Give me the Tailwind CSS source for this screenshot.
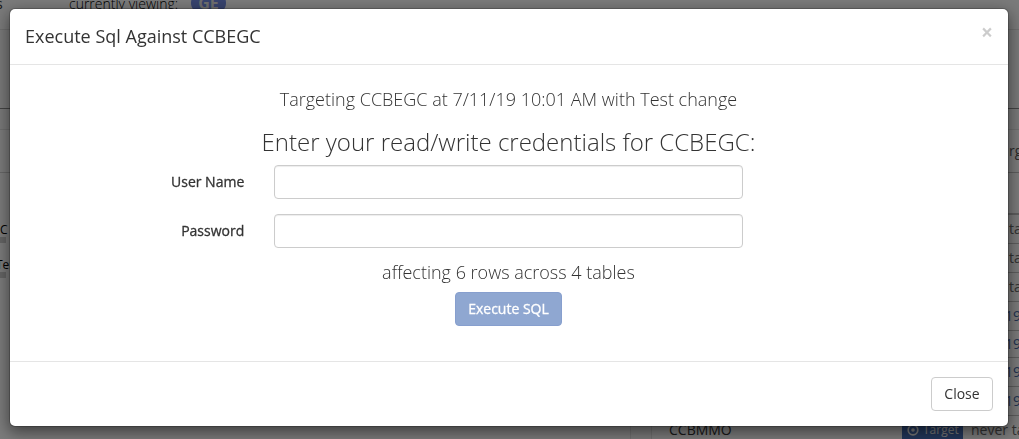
<!DOCTYPE html>
<html lang="en">
<head>
<meta charset="utf-8">
<meta name="viewport" content="width=device-width, initial-scale=1">
<title>Execute Sql</title>
<script src="https://cdn.jsdelivr.net/npm/@tailwindcss/browser@4"></script>
</head>
<body class="h-screen overflow-hidden bg-[#f2f2f2] font-['Open_Sans',sans-serif] text-sm text-[#333]">

<!-- Page behind the dialog -->
<div class="flex flex-col h-screen overflow-hidden" aria-hidden="true">
  <header class="flex h-[30px] shrink-0 items-start border-b border-[#dcdcdc] bg-[#f5f5f5] text-sm leading-5">
    <span class="-mt-1.5 w-[69px] -indent-1">s</span>
    <span class="-mt-1.5 w-[108px] whitespace-nowrap font-light text-black">currently viewing:</span>
    <span class="-mt-2 ml-3.5 w-[35px] rounded-full bg-[#6f87dc] text-center text-base leading-[22px] font-bold text-[#ddd]">GE</span>
  </header>
  <div class="h-[79px] shrink-0 border-b border-[#888] bg-[#f2f2f2]"></div>
  <main class="flex grow gap-5 pt-5">
    <section class="w-[631px] shrink-0 border border-l-0 border-[#ddd] bg-[#f6f6f6]">
      <div class="h-[43px] border-b border-[#ccc]"></div>
      <div class="mt-[50px] text-xs leading-[14px] text-black"><p>C</p><div class="h-1.5 w-1.5 bg-[#c8c8c8]"></div></div>
      <div class="mt-[15px] -indent-1 text-xs leading-[14px] text-black"><p>Te:</p><div class="h-1.5 w-1.5 bg-[#c8c8c8]"></div></div>
    </section>
    <section class="min-w-0 grow overflow-hidden border-l border-t border-[#ddd] bg-[#f6f6f6]">
      <div class="flex h-[43px] items-center border-b border-[#bbb] pl-[357px] text-sm text-[#555]">rget</div>
      <table class="mt-10 w-[500px] table-fixed border-t-2 border-[#bbb] text-[#666]">
        <colgroup><col class="w-[250px]"><col class="w-[69px]"><col></colgroup>
        <tbody>
          <tr class="h-[29px] border-b border-[#bbb]"><td></td><td></td><td class="pl-[38px]">ta</td></tr>
          <tr class="h-[29px] border-b border-[#bbb]"><td></td><td></td><td class="pl-[38px]">ta</td></tr>
          <tr class="h-[29px] border-b border-[#bbb]"><td></td><td></td><td class="pl-[38px]">ta</td></tr>
          <tr class="h-[29px] border-b border-[#bbb] text-[#4664a0]"><td></td><td></td><td class="pl-[34px]">19</td></tr>
          <tr class="h-[27px] border-b border-[#bbb] text-[#4664a0]"><td></td><td></td><td class="pl-[34px]">19</td></tr>
          <tr class="h-[29px] border-b border-[#bbb] text-[#4664a0]"><td></td><td></td><td class="pl-[34px]">19</td></tr>
          <tr class="h-[29px] border-b border-[#bbb] text-[#4664a0]"><td></td><td></td><td class="pl-[34px]">19</td></tr>
          <tr class="h-[29px]">
            <td class="pl-[17px] text-[#333]">CCBMMO</td>
            <td><span class="flex h-6 w-[61px] items-center gap-1 bg-[#446cb3] px-[5px] text-xs text-[#eee]">
              <svg class="size-3 shrink-0" viewBox="0 0 12 12" fill="none"><circle cx="6" cy="6" r="4.8" stroke="currentColor" stroke-width="1.7"/><circle cx="6" cy="6" r="1.8" fill="currentColor"/></svg>Target</span></td>
            <td>never targeted</td>
          </tr>
        </tbody>
      </table>
    </section>
  </main>
</div>

<!-- Dialog -->
<div class="fixed inset-0 overflow-hidden bg-black/50 pl-[9px] pr-2.5 pt-2">
  <div role="dialog" aria-modal="true" aria-labelledby="dialog-title" class="rounded-md border border-black/20 bg-white bg-clip-padding shadow-[0_5px_15px_rgba(0,0,0,0.5)]">
    <div class="flex items-start justify-between border-b border-[#e5e5e5] p-[15px]">
      <h4 id="dialog-title" class="text-lg leading-[25px]">Execute Sql Against CCBEGC</h4>
      <button type="button" aria-label="Close dialog" class="-mt-0.5 text-[21px] leading-5 font-bold text-black/20">×</button>
    </div>
    <form class="py-[15px] pr-4 pl-[15px]" onsubmit="return false">
      <h4 class="mt-[9px] mb-2.5 text-center text-lg leading-5 font-light">Targeting CCBEGC at 7/11/19 10:01 AM with Test change</h4>
      <h3 class="mt-5 mb-2.5 text-center text-2xl leading-[26px] font-light">Enter your read/write credentials for CCBEGC:</h3>
      <div class="-mx-[15px] mb-[15px] grid grid-cols-12">
        <label for="user" class="col-span-3 px-[15px] pt-[7px] text-right [-webkit-text-stroke:0.3px_#333]">User Name</label>
        <div class="col-span-6 px-[15px]"><input id="user" type="text" class="block h-[34px] w-full rounded border border-[#ccc] bg-white px-3 shadow-[inset_0_1px_1px_rgba(0,0,0,0.075)]"></div>
      </div>
      <div class="-mx-[15px] mb-3.5 grid grid-cols-12">
        <label for="pass" class="col-span-3 px-[15px] pt-[7px] text-right [-webkit-text-stroke:0.3px_#333]">Password</label>
        <div class="col-span-6 px-[15px]"><input id="pass" type="password" class="block h-[34px] w-full rounded border border-[#ccc] bg-white px-3 shadow-[inset_0_1px_1px_rgba(0,0,0,0.075)]"></div>
      </div>
      <h4 class="mb-2.5 text-center text-lg leading-5 font-light">affecting 6 rows across 4 tables</h4>
      <div class="mb-5"><button type="submit" disabled class="mx-auto block h-[34px] rounded border border-[#879fce] bg-[#8fa7d1] px-3 text-white [-webkit-text-stroke:0.3px_#fff]">Execute SQL</button></div>
    </form>
    <div class="flex justify-end border-t border-[#e5e5e5] p-[15px]">
      <button type="button" class="h-[34px] min-w-[62px] rounded border border-[#ccc] bg-white px-3 text-[#333]">Close</button>
    </div>
  </div>
</div>
</body>
</html>
